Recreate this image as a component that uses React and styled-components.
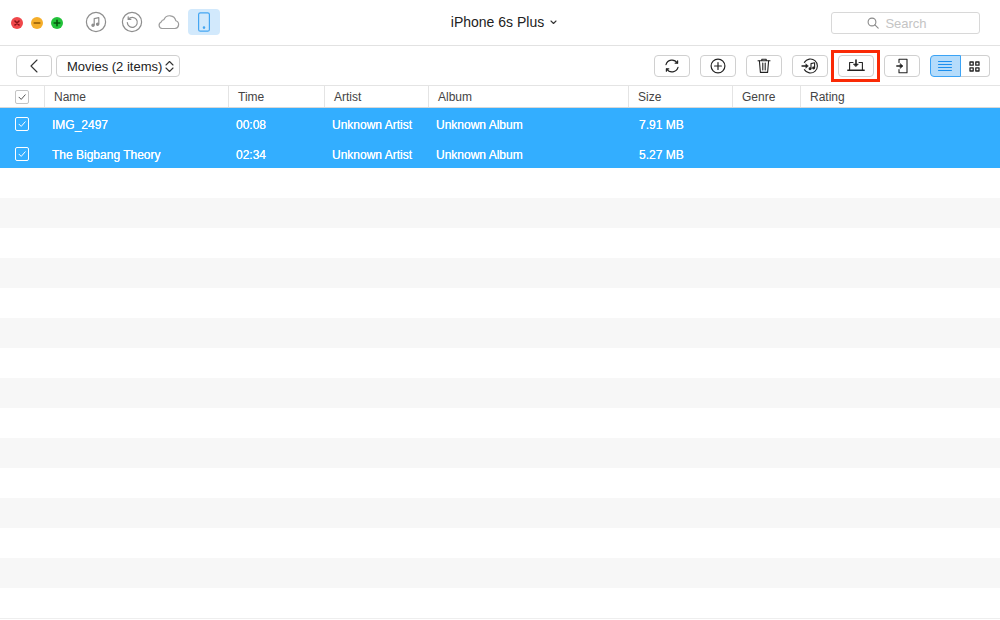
import React from 'react';
import styled, { createGlobalStyle } from 'styled-components';

const GlobalStyle = createGlobalStyle`
    html, body {
        margin: 0;
        padding: 0;
        background: #ffffff;
    }
    body {
        font-family: "Liberation Sans", Arial, sans-serif;
        color: #333333;
    }
`

const Window = styled.div`
    width: 1000px;
    height: 620px;
    box-sizing: border-box;
    padding-bottom: 1px;
    display: flex;
    flex-direction: column;
    overflow: hidden;
    background: #ffffff;
`

const TitleBar = styled.div`
    height: 45px;
    flex: none;
    display: grid;
    grid-template-columns: 1fr auto 1fr;
    align-items: center;
    border-bottom: 1px solid #e2e2e2;
`

const TitleLeft = styled.div`
    display: flex;
    align-items: center;
    padding-left: 11px;
`

const Light = styled.span`
    width: 12px;
    height: 12px;
    border-radius: 50%;
    margin-right: 8px;
    background: ${p => p.$color};
    display: flex;
`

const NavIcons = styled.div`
    display: flex;
    align-items: center;
    margin: -1px 0 0 7px;
`

const NavIcon = styled.div`
    height: 26px;
    display: flex;
    align-items: center;
    justify-content: center;
    border-radius: 4px;
    background: ${p => (p.$active ? '#d2e9fc' : 'transparent')};
    width: ${p => (p.$active ? '32px' : '36px')};
    margin-left: ${p => (p.$active ? '2px' : '0')};
`

const DeviceName = styled.div`
    font-size: 14px;
    color: #222222;
    display: flex;
    align-items: center;
    gap: 6px;
    padding: 0 0 1px 8px;
`

const TitleRight = styled.div`
    display: flex;
    justify-content: flex-end;
    padding-right: 20px;
`

const SearchBox = styled.div`
    width: 147px;
    height: 20px;
    border: 1px solid #d8d8d8;
    border-radius: 3px;
    display: flex;
    align-items: center;
    justify-content: center;
    font-size: 13px;
    color: #c4c4c4;
`

const SearchInner = styled.div`
    display: flex;
    align-items: center;
    gap: 6px;
    padding: 1px 17px 0 0;
`

const Toolbar = styled.div`
    height: 39px;
    flex: none;
    display: flex;
    align-items: center;
    padding: 1px 10px 0 16px;
    box-sizing: border-box;
`

const ToolButton = styled.button`
    position: relative;
    width: 36px;
    height: 22px;
    padding: 0;
    margin: 0 0 0 ${p => p.$gap ?? 10}px;
    flex: none;
    display: flex;
    align-items: center;
    justify-content: center;
    background: #ffffff;
    border: 1px solid #d0d0d0;
    border-radius: 4px;

    ${p => p.$marked && `
        &::after {
            content: "";
            position: absolute;
            left: -8px;
            top: -6px;
            width: 43px;
            height: 26px;
            border: 3px solid #fa2a06;
        }
    `}
`

const SelectButton = styled.button`
    width: 124px;
    height: 22px;
    margin-left: 4px;
    padding: 0 5px 0 10px;
    display: flex;
    align-items: center;
    justify-content: space-between;
    background: #ffffff;
    border: 1px solid #d0d0d0;
    border-radius: 4px;
    font-family: inherit;
    font-size: 13px;
    color: #222222;
`

const Spacer = styled.div`
    flex: 1;
`

const ViewSwitch = styled.div`
    display: flex;
    margin-left: 10px;
    width: 60px;
    height: 22px;
`

const ViewOption = styled.div`
    flex: 1;
    display: flex;
    align-items: center;
    justify-content: center;
    box-sizing: border-box;
    border: 1px solid ${p => (p.$active ? '#3ba3f5' : '#d0d0d0')};
    border-left-width: ${p => (p.$active ? 1 : 0)}px;
    background: ${p => (p.$active ? '#b5dcfb' : '#ffffff')};
    border-radius: ${p => (p.$active ? '4px 0 0 4px' : '0 4px 4px 0')};
`

const columns = '45px 184px 96px 104px 200px 104px 68px 1fr';

const HeaderRow = styled.div`
    height: 23px;
    flex: none;
    box-sizing: border-box;
    display: grid;
    grid-template-columns: ${columns};
    border-top: 1px solid #e4e4e4;
    border-bottom: 1px solid #d8d8d8;
    font-size: 12px;
    color: #444444;
`

const HeaderCell = styled.div`
    display: flex;
    align-items: center;
    padding-left: ${p => p.$pad ?? 9}px;
    border-right: 1px solid #e4e4e4;

    &:last-child {
        border-right: 0;
    }
`

const CheckCell = styled.div`
    display: flex;
    align-items: center;
    padding: 2px 0 0 15px;
`

const Check = styled.span`
    width: 12px;
    height: 12px;
    border: 1px solid ${p => (p.$light ? '#ffffff' : '#c4c4c4')};
    border-radius: 2px;
    display: flex;
    align-items: center;
    justify-content: center;
`

const Rows = styled.div`
    flex: 1;
    overflow: hidden;
    border-bottom: 1px solid #eeeeee;
`

const Row = styled.div`
    height: 30px;
    display: grid;
    grid-template-columns: ${columns};
    background: ${p => (p.$selected ? '#33aeff' : p.$striped ? '#f7f7f7' : '#ffffff')};
    color: #ffffff;
    font-size: 12px;
`

const Cell = styled.div`
    display: flex;
    align-items: center;
    padding: 4px 0 0 ${p => p.$pad ?? 7}px;
    text-shadow: 0 0 0.6px #ffffff;
    white-space: nowrap;
`

const items = [
    { name: 'IMG_2497', time: '00:08', artist: 'Unknown Artist', album: 'Unknown Album', size: '7.91 MB' },
    { name: 'The Bigbang Theory', time: '02:34', artist: 'Unknown Artist', album: 'Unknown Album', size: '5.27 MB' },
];

const heads = ['Name', 'Time', 'Artist', 'Album', 'Size', 'Genre', 'Rating'];

function Stroke({ w, h, color = '#222', sw = 1.2, children }) {
    return (
        <svg width={w} height={h} viewBox={`0 0 ${w} ${h}`} fill="none" stroke={color} strokeWidth={sw} strokeLinecap="round" strokeLinejoin="round">
            {children}
        </svg>
    )
}

function Tick({ color }) {
    return (
        <Stroke w={10} h={10} color={color} sw={1}>
            <path d="M2 5.2 L4.2 7.4 L8.2 2.8" />
        </Stroke>
    )
}

function App() {
    const stripes = Array.from({ length: 15 }, (_, i) => i);

    return (
        <Window>
            <GlobalStyle />
            <TitleBar>
                <TitleLeft>
                    <Light $color="#f0474a">
                        <Stroke w={12} h={12} color="#8a1216" sw={1.6}><path d="M4 4 L8 8 M8 4 L4 8" /></Stroke>
                    </Light>
                    <Light $color="#f5ae2a">
                        <Stroke w={12} h={12} color="#8f5a06" sw={1.6}><path d="M3.2 6 H8.8" /></Stroke>
                    </Light>
                    <Light $color="#23c23a">
                        <Stroke w={12} h={12} color="#07560f" sw={1.6}><path d="M3.2 6 H8.8 M6 3.2 V8.8" /></Stroke>
                    </Light>
                    <NavIcons>
                        <NavIcon>
                            <Stroke w={22} h={22} color="#8e8e8e" sw={1.2}>
                                <circle cx="11" cy="11" r="9.6" />
                                <path d="M9.2 14 V7.6 L13.8 6.6 V13" />
                                <circle cx="8" cy="14.2" r="1.1" fill="#8e8e8e" />
                                <circle cx="12.6" cy="13.2" r="1.1" fill="#8e8e8e" />
                            </Stroke>
                        </NavIcon>
                        <NavIcon>
                            <Stroke w={22} h={22} color="#8e8e8e" sw={1.2}>
                                <circle cx="11" cy="11" r="9.6" />
                                <path d="M7.4 8.2 A5 5 0 1 1 6.3 11.6" />
                                <path d="M7.2 5.8 V8.4 H9.8" />
                            </Stroke>
                        </NavIcon>
                        <NavIcon>
                            <Stroke w={24} h={16} color="#9c9c9c" sw={1.2}>
                                <path d="M6 14.5 H19 A4 4 0 0 0 19.8 6.7 A6.2 6.2 0 0 0 8 5.6 A3.4 3.4 0 0 0 5.2 8 A3.4 3.4 0 0 0 6 14.5 Z" />
                            </Stroke>
                        </NavIcon>
                        <NavIcon $active>
                            <Stroke w={14} h={20} color="#44a6f2" sw={1.2}>
                                <rect x="1.6" y="0.8" width="10.8" height="18.4" rx="1.8" />
                                <circle cx="7" cy="15.6" r="0.7" fill="#44a6f2" />
                            </Stroke>
                        </NavIcon>
                    </NavIcons>
                </TitleLeft>
                <DeviceName>
                    iPhone 6s Plus
                    <Stroke w={7} h={5} color="#333" sw={1.1}><path d="M1 1 L3.5 3.5 L6 1" /></Stroke>
                </DeviceName>
                <TitleRight>
                    <SearchBox>
                        <SearchInner>
                            <Stroke w={12} h={12} color="#8a8a8a" sw={1.1}>
                                <circle cx="5" cy="5" r="3.9" />
                                <path d="M7.9 7.9 L11.2 11.2" />
                            </Stroke>
                            Search
                        </SearchInner>
                    </SearchBox>
                </TitleRight>
            </TitleBar>

            <Toolbar>
                <ToolButton $gap={0}>
                    <Stroke w={10} h={16} color="#333" sw={1.1}><path d="M8 2 L2 8 L8 14" /></Stroke>
                </ToolButton>
                <SelectButton>
                    Movies (2 items)
                    <Stroke w={9} h={13} color="#333" sw={1.1}><path d="M1 5 L4.5 1.5 L8 5 M1 8 L4.5 11.5 L8 8" /></Stroke>
                </SelectButton>
                <Spacer />
                <ToolButton $gap={0}>
                    <Stroke w={16} h={16}>
                        <path d="M2 6.6 A6.2 6.2 0 0 1 13.2 5" />
                        <path d="M14 9.4 A6.2 6.2 0 0 1 2.8 11" />
                        <path d="M11.2 5.2 H13.6 V2.8" />
                        <path d="M4.8 10.8 H2.4 V13.2" />
                    </Stroke>
                </ToolButton>
                <ToolButton>
                    <Stroke w={16} h={16}>
                        <circle cx="8" cy="8" r="6.9" />
                        <path d="M8 4.6 V11.4 M4.6 8 H11.4" />
                    </Stroke>
                </ToolButton>
                <ToolButton>
                    <Stroke w={14} h={16} sw={1.1}>
                        <path d="M1 2.8 H13 M4.8 2.6 V1.2 H9.2 V2.6" />
                        <path d="M2.4 3 L3.4 14.4 H10.6 L11.6 3" />
                        <path d="M5.8 5 V12 M8.2 5 V12" />
                    </Stroke>
                </ToolButton>
                <ToolButton>
                    <Stroke w={18} h={16} sw={1.1}>
                        <path d="M3.4 4.4 A7 7 0 1 1 3.4 11.6" />
                        <path d="M1 8 H5.4" strokeWidth="1.4" />
                        <path d="M5 6 L7.4 8 L5 10 Z" fill="#222" strokeWidth="0.5" />
                        <path d="M10 10.6 V5.6 L13.6 4.8 V9.8" />
                        <circle cx="9" cy="10.8" r="0.9" fill="#222" />
                        <circle cx="12.6" cy="10" r="0.9" fill="#222" />
                    </Stroke>
                </ToolButton>
                <ToolButton $marked>
                    <Stroke w={18} h={14} sw={1.1}>
                        <path d="M2.6 11 V3.5 H6 M12 3.5 H15.4 V11" />
                        <path d="M0.8 11.2 H17.2" strokeWidth="1.4" />
                        <path d="M9 1 V5" strokeWidth="1.6" />
                        <path d="M6.6 5 H11.4 L9 7.6 Z" fill="#222" strokeWidth="0.6" />
                    </Stroke>
                </ToolButton>
                <ToolButton>
                    <Stroke w={12} h={16} sw={1.1}>
                        <path d="M3 4.4 V1.2 H11 V14.8 H3 V11.6" />
                        <path d="M0.8 8 H4.6" strokeWidth="1.5" />
                        <path d="M4.4 5.8 L7 8 L4.4 10.2 Z" fill="#222" strokeWidth="0.6" />
                    </Stroke>
                </ToolButton>
                <ViewSwitch>
                    <ViewOption $active>
                        <Stroke w={14} h={12} color="#1b8fee" sw={1}>
                            <path d="M0.5 1.5 H13.5 M0.5 4.5 H13.5 M0.5 7.5 H13.5 M0.5 10.5 H13.5" />
                        </Stroke>
                    </ViewOption>
                    <ViewOption>
                        <Stroke w={11} h={11} sw={1.3}>
                            <rect x="1" y="1" width="3.2" height="3.2" />
                            <rect x="6.8" y="1" width="3.2" height="3.2" />
                            <rect x="1" y="6.8" width="3.2" height="3.2" />
                            <rect x="6.8" y="6.8" width="3.2" height="3.2" />
                        </Stroke>
                    </ViewOption>
                </ViewSwitch>
            </Toolbar>

            <HeaderRow>
                <HeaderCell $pad={15}>
                    <Check><Tick color="#555" /></Check>
                </HeaderCell>
                {heads.map(h => (
                    <HeaderCell key={h}>{h}</HeaderCell>
                ))}
            </HeaderRow>

            <Rows>
                {items.map(item => (
                    <Row key={item.name} $selected>
                        <CheckCell><Check $light><Tick color="#ffffff" /></Check></CheckCell>
                        <Cell>{item.name}</Cell>
                        <Cell>{item.time}</Cell>
                        <Cell>{item.artist}</Cell>
                        <Cell>{item.album}</Cell>
                        <Cell $pad={10}>{item.size}</Cell>
                        <Cell />
                        <Cell />
                    </Row>
                ))}
                {stripes.map(i => (
                    <Row key={i} $striped={i % 2 === 1} />
                ))}
            </Rows>
        </Window>
    )
}

export default App;
